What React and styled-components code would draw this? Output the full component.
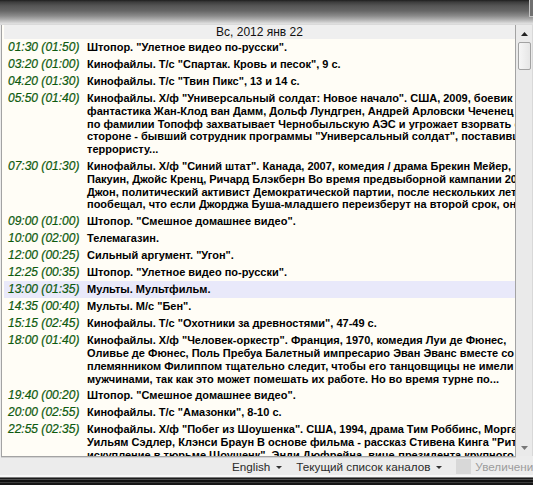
import React from 'react';
import styled, { createGlobalStyle } from 'styled-components';

const GlobalStyle = createGlobalStyle`
  html, body {
    margin: 0;
    padding: 0;
    background: #ececec;
  }
  body {
    font-family: "Liberation Sans", Arial, sans-serif;
  }
`;

const programs = [
  { start: '01:30', len: '01:50', lines: ['Штопор. "Улетное видео по-русски".'] },
  { start: '03:20', len: '01:00', lines: ['Кинофайлы. Т/с "Спартак. Кровь и песок", 9 с.'] },
  { start: '04:20', len: '01:30', lines: ['Кинофайлы. Т/с "Твин Пикс", 13 и 14 с.'] },
  {
    start: '05:50',
    len: '01:40',
    lines: [
      'Кинофайлы. Х/ф "Универсальный солдат: Новое начало". США, 2009, боевик /',
      'фантастика Жан-Клод ван Дамм, Дольф Лундгрен, Андрей Арловски Чеченец',
      'по фамилии Топофф захватывает Чернобыльскую АЭС и угрожает взорвать её',
      'стороне - бывший сотрудник программы "Универсальный солдат", поставивший',
      'террористу...',
    ],
  },
  {
    start: '07:30',
    len: '01:30',
    lines: [
      'Кинофайлы. Х/ф "Синий штат". Канада, 2007, комедия / драма Брекин Мейер,',
      'Пакуин, Джойс Кренц, Ричард Блэкберн Во время предвыборной кампании 2004',
      'Джон, политический активист Демократической партии, после нескольких лет',
      'пообещал, что если Джорджа Буша-младшего переизберут на второй срок, он',
    ],
  },
  { start: '09:00', len: '01:00', lines: ['Штопор. "Смешное домашнее видео".'] },
  { start: '10:00', len: '02:00', lines: ['Телемагазин.'] },
  { start: '12:00', len: '00:25', lines: ['Сильный аргумент. "Угон".'] },
  { start: '12:25', len: '00:35', lines: ['Штопор. "Улетное видео по-русски".'] },
  { start: '13:00', len: '01:35', lines: ['Мульты. Мультфильм.'], current: true },
  { start: '14:35', len: '00:40', lines: ['Мульты. М/с "Бен".'] },
  { start: '15:15', len: '02:45', lines: ['Кинофайлы. Т/с "Охотники за древностями", 47-49 с.'] },
  {
    start: '18:00',
    len: '01:40',
    lines: [
      'Кинофайлы. Х/ф "Человек-оркестр". Франция, 1970, комедия Луи де Фюнес,',
      'Оливье де Фюнес, Поль Пребуа Балетный импресарио Эван Эванс вместе со',
      'племянником Филиппом тщательно следит, чтобы его танцовщицы не имели',
      'мужчинами, так как это может помешать их работе. Но во время турне по...',
    ],
  },
  { start: '19:40', len: '00:20', lines: ['Штопор. "Смешное домашнее видео".'] },
  { start: '20:00', len: '02:55', lines: ['Кинофайлы. Т/с "Амазонки", 8-10 с.'] },
  {
    start: '22:55',
    len: '02:35',
    lines: [
      'Кинофайлы. Х/ф "Побег из Шоушенка". США, 1994, драма Тим Роббинс, Морган',
      'Уильям Сэдлер, Клэнси Браун В основе фильма - рассказ Стивена Кинга "Рита',
      'искупление в тюрьме Шоушенк". Энди Дюфрейна, вице-президента крупного',
    ],
  },
];

const Window = styled.div`
  width: 533px;
  height: 485px;
  display: flex;
  flex-direction: column;
  overflow: hidden;
  background: #ececec;
`;

// dark blurred strip of the window chrome above the list
const TitleBar = styled.div`
  height: 24px;
  flex: none;
  display: flex;
  justify-content: flex-end;
  align-items: flex-start;
  background-color: #686868;
  background-image: linear-gradient(180deg, #1e1e1e 0%, #3c3c3c 8%, #565656 25%, #666666 45%, #8a8a8a 66%, #b3b3b3 83%, #d6d6d6 95%, #e2e2e2 100%);
`;

const CornerBox = styled.div`
  width: 3px;
  height: 16px;
  border-left: 1px solid #c4c4c4;
  border-bottom: 1px solid #c4c4c4;
  background: #707070;
`;

const Body = styled.div`
  height: 434px;
  flex: none;
  display: flex;
  border-top: 1px solid #dadada;
  box-sizing: border-box;
`;

const ListPanel = styled.div`
  flex: 1;
  min-width: 0;
  margin-left: 1px;
  display: flex;
  flex-direction: column;
  overflow: hidden;
  background: #fffdf6;
  border-left: 1px solid #a3a3a3;
  border-right: 1px solid #a3a3a3;
  border-bottom: 1px solid #a3a3a3;
  box-shadow: 0 1px 0 #d2d2d2;
  padding-left: 2px;
  margin-bottom: 1px;
`;

const DateHeader = styled.div`
  height: 14px;
  flex: none;
  background: #efefef;
  color: #111;
  font-size: 12px;
  line-height: 14px;
  text-align: center;
`;

const Row = styled.div`
  display: flex;
  flex: none;
  box-sizing: border-box;
  min-height: 17px;
  padding: 2px 0 2px 4px;
  line-height: 12.8px;
  background: ${(p) => (p.$current ? '#e9e9fa' : 'transparent')};
`;

const Time = styled.div`
  width: 79px;
  flex: none;
  font-size: 12px;
  font-style: italic;
  color: #0e5a0e;
  white-space: nowrap;
  -webkit-text-stroke: 0.2px #0e5a0e;
`;

const Title = styled.div`
  flex: 1;
  min-width: 0;
  font-size: 11px;
  font-weight: bold;
  color: #000;
`;

const Line = styled.div`
  white-space: nowrap;
`;

const Scrollbar = styled.div`
  width: 16px;
  flex: none;
  display: flex;
  flex-direction: column;
  align-items: center;
  background: #eaeaea;
  border-right: 1px solid #d8d8d8;
  margin-bottom: 2px;
`;

const ArrowCell = styled.div`
  height: 17px;
  width: 100%;
  display: flex;
  align-items: center;
  justify-content: center;
`;

const Thumb = styled.div`
  width: 11px;
  height: 26px;
  border: 1px solid #a2a2a2;
  border-radius: 2px;
  background: linear-gradient(to right, #f6f6f6, #e6e6e6);
`;

const Track = styled.div`
  flex: 1;
`;

const StatusBar = styled.div`
  height: 19px;
  flex: none;
  box-sizing: border-box;
  display: flex;
  align-items: center;
  padding-left: 232px;
  gap: 14px;
  background: #ececec;
  border-bottom: 2px solid #f8f8f8;
  font-size: 11.7px;
  color: #2a2a2a;
  white-space: nowrap;
  overflow: hidden;
`;

const Menu = styled.div`
  display: flex;
  align-items: center;
  gap: 6px;
  flex: none;
`;

const Caret = styled.span`
  width: 0;
  height: 0;
  border-left: 3px solid transparent;
  border-right: 3px solid transparent;
  border-top: 3px solid #333;
  margin-top: 1px;
`;

const Zoom = styled.div`
  display: flex;
  align-items: center;
  gap: 4px;
  flex: none;
  color: #9c9c9c;
`;

const ZoomBox = styled.span`
  width: 15px;
  height: 15px;
  background: #d8d8d8;
`;

// striped dark edge under the status bar
const BottomStrip = styled.div`
  height: 8px;
  flex: none;
  background-color: #161616;
  background-image: linear-gradient(180deg, #7a7a7a 0%, #7a7a7a 12%, #1c1c1c 12%, #1c1c1c 25%, #505050 25%, #505050 37%, #111111 37%, #111111 62%, #3c3c3c 62%, #3c3c3c 75%, #161616 75%, #161616 100%);
`;

const UpArrow = () => (
  <svg width="7" height="4" viewBox="0 0 7 4">
    <path d="M0 4 L3.5 0 L7 4 Z" fill="#222" />
  </svg>
);

const DownArrow = () => (
  <svg width="7" height="4" viewBox="0 0 7 4">
    <path d="M0 0 L7 0 L3.5 4 Z" fill="#777" />
  </svg>
);

export default function App() {
  return (
    <>
      <GlobalStyle />
      <Window>
        <TitleBar>
          <CornerBox />
        </TitleBar>
        <Body>
          <ListPanel>
            <DateHeader>Вс, 2012 янв 22</DateHeader>
            {programs.map((p) => (
              <Row key={p.start} $current={p.current}>
                <Time>
                  {p.start} ({p.len})
                </Time>
                <Title>
                  {p.lines.map((l, i) => (
                    <Line key={i}>{l}</Line>
                  ))}
                </Title>
              </Row>
            ))}
          </ListPanel>
          <Scrollbar>
            <ArrowCell>
              <UpArrow />
            </ArrowCell>
            <Thumb />
            <Track />
            <ArrowCell>
              <DownArrow />
            </ArrowCell>
          </Scrollbar>
        </Body>
        <StatusBar>
          <Menu>
            English <Caret />
          </Menu>
          <Menu>
            Текущий список каналов <Caret />
          </Menu>
          <Zoom>
            <ZoomBox />
            Увеличение
          </Zoom>
        </StatusBar>
        <BottomStrip />
      </Window>
    </>
  );
}
